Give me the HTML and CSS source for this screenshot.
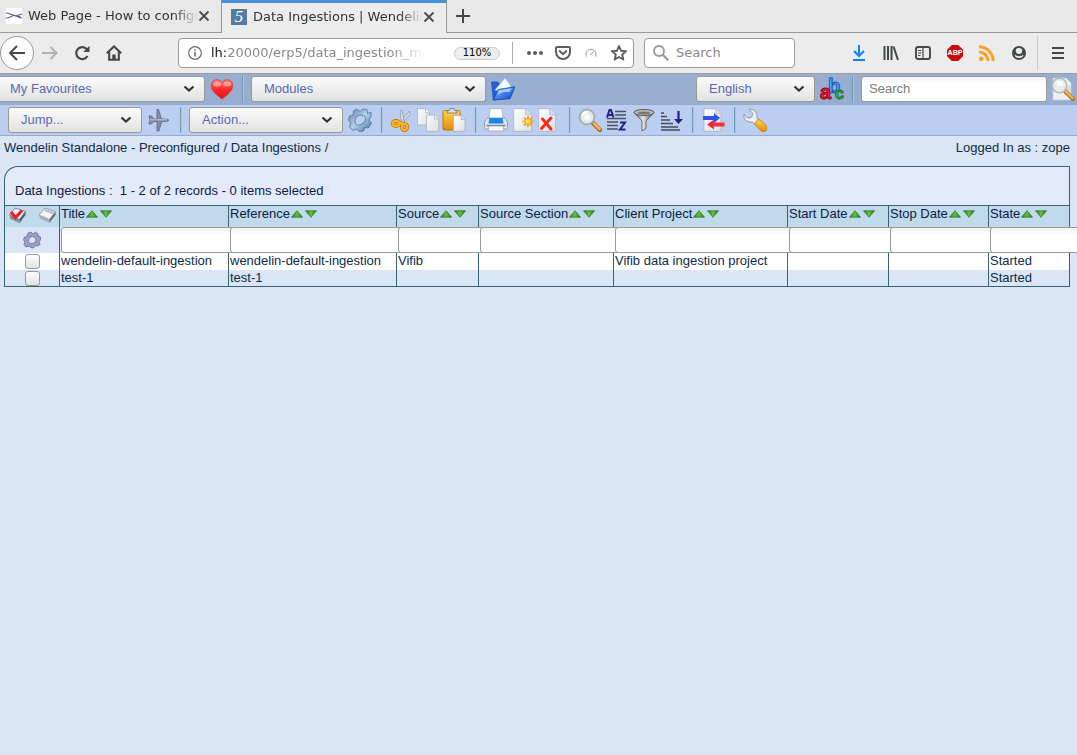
FILE: index.html
```html
<!DOCTYPE html>
<html lang="en">
<head>
<meta charset="utf-8">
<title>Data Ingestions | Wendelin</title>
<link rel="stylesheet" href="styles.css">
</head>
<body>
<svg class="defs" aria-hidden="true">
  <defs>
    <linearGradient id="gGreen" x1="0" y1="0" x2="1" y2="0"><stop offset="0" stop-color="#2c7424"/><stop offset=".5" stop-color="#62c43c"/><stop offset="1" stop-color="#256820"/></linearGradient>
    <linearGradient id="gPage" x1="0" y1="0" x2="1" y2="1"><stop offset="0" stop-color="#fff"/><stop offset="1" stop-color="#dcdfe6"/></linearGradient>
    <linearGradient id="gSteel" x1="0" y1="0" x2="1" y2="1"><stop offset="0" stop-color="#5d83ab"/><stop offset=".5" stop-color="#b4cde4"/><stop offset="1" stop-color="#48709c"/></linearGradient>
    <linearGradient id="gGold" x1="0" y1="0" x2="0" y2="1"><stop offset="0" stop-color="#ffd548"/><stop offset="1" stop-color="#e58a08"/></linearGradient>
    <linearGradient id="gHeart" x1="0" y1="0" x2="0" y2="1"><stop offset="0" stop-color="#ff7a70"/><stop offset=".5" stop-color="#ff2a2a"/><stop offset="1" stop-color="#d81414"/></linearGradient>
    <linearGradient id="gMetal" x1="0" y1="0" x2="1" y2="0"><stop offset="0" stop-color="#555"/><stop offset=".45" stop-color="#e8e8e8"/><stop offset="1" stop-color="#444"/></linearGradient>
    <linearGradient id="gBlue" x1="0" y1="0" x2="1" y2="1"><stop offset="0" stop-color="#7fc0ff"/><stop offset="1" stop-color="#0a3fd0"/></linearGradient>
    <radialGradient id="gLens"><stop offset="0" stop-color="#fff"/><stop offset="1" stop-color="#d3dfd9"/></radialGradient>
    <symbol id="chev" viewBox="0 0 12 8"><path d="M1.500 1.500 6 5.500 10.500 1.500" fill="none" stroke="#2e3436" stroke-width="2.200"/></symbol>
    <symbol id="up" viewBox="0 0 12 8"><path d="M.5 7.200 6 .7l5.500 6.500z" fill="url(#gGreen)" stroke="#337a33" stroke-width=".8"/></symbol>
    <symbol id="down" viewBox="0 0 12 8"><path d="M.5.800h11L6 7.300z" fill="url(#gGreen)" stroke="#337a33" stroke-width=".8"/></symbol>
    <symbol id="lens" viewBox="0 0 24 24"><path d="m15 15 7 7" stroke="#a96a20" stroke-width="4.500" stroke-linecap="round"/><path d="m16 15.500 5.500 5.500" stroke="#f5b652" stroke-width="2.500" stroke-linecap="round"/><circle cx="9" cy="9" r="7.500" fill="url(#gLens)" stroke="#a1a9a7" stroke-width="1.600"/><path d="M4.500 8a5 5 0 0 1 5-4" fill="none" stroke="#fff" stroke-width="2"/></symbol>
    <symbol id="close" viewBox="0 0 12 12"><path d="m1.500 1.500 9 9m0-9-9 9" stroke="#4a5052" stroke-width="1.900"/></symbol>
  </defs>
</svg>

<header class="browser">
  <div class="tabs">
    <div class="tab">
      <svg class="fav" viewBox="0 0 16 16"><path fill="#fff" d="M0 0h16v16H0z"/><path d="M0 5c4 0 6 3 15 4M0 10c4 0 5-2 8-2.500M9 8c3-.5 5-1.500 7-2M9 8c3 0 4 2 7 2" fill="none" stroke="#585a86" stroke-width="1.100"/></svg>
      <span class="tab-title">Web Page - How to configu</span>
      <button class="tab-close" aria-label="Close tab"><svg width="12" height="12"><use href="#close"/></svg></button>
    </div>
    <div class="tab active">
      <span class="fav five">5</span>
      <span class="tab-title">Data Ingestions | Wendelin</span>
      <button class="tab-close" aria-label="Close tab"><svg width="12" height="12"><use href="#close"/></svg></button>
    </div>
    <button class="new-tab" aria-label="New tab"><svg width="14" height="14" viewBox="0 0 14 14"><path d="M7 0v14M0 7h14" stroke="#43494b" stroke-width="2"/></svg></button>
  </div>
  <div class="nav">
    <button class="back" aria-label="Back"><svg width="18" height="16" viewBox="0 0 18 16"><path d="M17 8H2m7-7L2 8l7 7" fill="none" stroke="#43494b" stroke-width="2"/></svg></button>
    <button class="tool" aria-label="Forward"><svg width="16" height="16" viewBox="0 0 16 16"><path d="M0 8h14M8.500 2l6 6-6 6" fill="none" stroke="#b0b2b3" stroke-width="2"/></svg></button>
    <button class="tool" aria-label="Reload"><svg width="16" height="16" viewBox="0 0 16 16"><path d="M13.500 11A6 6 0 1 1 12.800 4.200" fill="none" stroke="#43494b" stroke-width="2.200"/><path d="M15.500.8V7H9.300z" fill="#43494b"/></svg></button>
    <button class="tool" aria-label="Home"><svg width="16" height="16" viewBox="0 0 16 16"><path d="M.8 8.300 8 1.400l7.200 6.900M3.200 7v7.800h9.600V7" fill="none" stroke="#43494b" stroke-width="2.100"/><path d="M6.300 9.500h3.400V15H6.300z" fill="#43494b"/></svg></button>
    <div class="url">
      <svg width="14" height="14" viewBox="0 0 14 14"><circle cx="7" cy="7" r="6.300" fill="none" stroke="#6b6b6b" stroke-width="1.200"/><path d="M7 6v4.500M7 3.200v1.600" stroke="#6b6b6b" stroke-width="1.600"/></svg>
      <span class="address"><b>lh:</b>20000/erp5/data_ingestion_mo</span>
      <button class="zoom">110%</button>
      <span class="rule"></span>
      <button class="in" aria-label="Page actions"><svg width="16" height="16" viewBox="0 0 16 16"><g fill="#5b5e60"><circle cx="2" cy="8" r="2"/><circle cx="8" cy="8" r="2"/><circle cx="14" cy="8" r="2"/></g></svg></button>
      <button class="in" aria-label="Save to Pocket"><svg width="16" height="16" viewBox="0 0 16 16"><path d="M2 2h12q1 0 1 1v4a7 7 0 0 1-14 0V3q0-1 1-1z" fill="none" stroke="#5b5e60" stroke-width="2"/><path d="m4.700 6 3.300 3.200L11.300 6" fill="none" stroke="#5b5e60" stroke-width="2" stroke-linecap="round"/></svg></button>
      <button class="in" aria-label="Speed"><svg width="16" height="16" viewBox="0 0 16 16"><path d="M3.500 11.500a5 5 0 1 1 9 0M7.500 10l3-3.500" fill="none" stroke="#8c8f91" stroke-width="1"/></svg></button>
      <button class="in star" aria-label="Bookmark"><svg width="16" height="16" viewBox="0 0 16 16"><path d="m8 1 2 4.700 5 .5-3.800 3.300 1.100 5L8 12l-4.300 2.500 1.100-5L1 6.200l5-.5z" fill="none" stroke="#5b5e60" stroke-width="1.900" stroke-linejoin="round"/></svg></button>
    </div>
    <label class="web-search">
      <svg width="16" height="16" viewBox="0 0 16 16"><circle cx="6" cy="6" r="5" fill="none" stroke="#999" stroke-width="1.900"/><path d="m9.700 9.700 5.600 5.600" stroke="#999" stroke-width="2.200"/></svg>
      <input type="text" placeholder="Search" aria-label="Web search">
    </label>
    <div class="extras">
      <button class="tool" aria-label="Downloads"><svg width="16" height="16" viewBox="0 0 16 16"><path d="M8 0v11M3 6l5 5 5-5M2 15h12" fill="none" stroke="#0a84ff" stroke-width="2"/></svg></button>
      <button class="tool" aria-label="Library"><svg width="16" height="16" viewBox="0 0 16 16"><path d="M1.500 1v14M5 1v14M8.500 1v14M10.500 1.500 15 15" stroke="#43494b" stroke-width="2"/></svg></button>
      <button class="tool" aria-label="Sidebars"><svg width="16" height="16" viewBox="0 0 16 16"><rect x="1" y="2" width="14" height="12" rx="2" fill="none" stroke="#43494b" stroke-width="1.900"/><path d="M8 2v12M3 5.500h3.500M3 8h3.500M3 10.500h2.500" stroke="#43494b" stroke-width="1.200"/></svg></button>
      <button class="abp">ABP</button>
      <button class="tool" aria-label="Feeds"><svg width="16" height="16" viewBox="0 0 16 16"><circle cx="2.300" cy="13.700" r="2.300" fill="#ff9a1f"/><path d="M0 7a9 9 0 0 1 9 9M0 1.800A14.200 14.200 0 0 1 14.200 16" fill="none" stroke="#ff9f26" stroke-width="3"/></svg></button>
      <button class="tool" aria-label="Account"><svg width="16" height="16" viewBox="0 0 16 16"><circle cx="8" cy="8" r="7" fill="#43494b"/><path d="M4.800 5.500q0-2.500 3.200-2.500t3.200 2.500q0 3.500-3.200 3.500T4.800 5.500z" fill="#ececec"/><path d="M3.500 9.500q1.500 1.700 4.500 1.700t4.500-1.700Q12 13 8 13t-4.500-3.500z" fill="#ececec"/></svg></button>
      <span class="rule light"></span>
      <button class="tool" aria-label="Menu"><svg width="12" height="14" viewBox="0 0 12 14"><path d="M0 2h12M0 7h12M0 12h12" stroke="#43494b" stroke-width="2"/></svg></button>
    </div>
  </div>
</header>

<form class="erp">
<div class="main-bar">
  <span class="pick favourites"><select aria-label="My Favourites"><option>My Favourites</option></select><svg><use href="#chev"/></svg></span>
  <button type="button" class="ic" aria-label="Go to favourite"><svg viewBox="0 0 24 24"><path d="M12 22C7 18 1.300 14.500 1.300 8.500 1.300 2 9 1 12 5.500 15 1 22.700 2 22.700 8.500 22.700 14.500 17 18 12 22z" fill="url(#gHeart)" stroke="#d8392f" stroke-width=".8"/><ellipse cx="7" cy="7" rx="4" ry="2.500" fill="#ffb0a8" opacity=".8"/><ellipse cx="17" cy="7" rx="4" ry="2.500" fill="#ffb0a8" opacity=".8"/></svg></button>
  <span class="sep"></span>
  <span class="pick modules"><select aria-label="Modules"><option>Modules</option></select><svg><use href="#chev"/></svg></span>
  <button type="button" class="ic" aria-label="Open module"><svg viewBox="0 0 24 24"><path d="M.7 5h6l1.500 2h9v14l-15 2z" fill="#2460dd" stroke="#1a49b5" stroke-width=".8"/><path d="m4 13 10-12 6 8-2 8z" fill="#f3f7ff" stroke="#a5b7da" stroke-width=".7"/><path d="M2.300 23 7 12.500l17-2.800-5 12z" fill="url(#gBlue)" stroke="#0c3bb5" stroke-width=".7"/><path d="M7.500 13.500 21 11.200l-3 4q-7-2-11 3z" fill="#b8e2ff" opacity=".8"/></svg></button>
  <span class="grow"></span>
  <span class="pick language"><select aria-label="Language"><option>English</option></select><svg><use href="#chev"/></svg></span>
  <button type="button" class="ic abc" aria-label="Change language"><svg viewBox="0 0 24 24" aria-hidden="true"><text x="8" y="16" fill="#4c9fee" stroke="#1a58bb">b</text><text x="0" y="22" fill="#ee2430" stroke="#a00016">a</text><text x="15" y="22" class="small" fill="#45bd55" stroke="#147534">c</text></svg></button>
  <span class="sep"></span>
  <input class="site-search" type="text" placeholder="Search" aria-label="Search">
  <button type="button" class="ic" aria-label="Search"><svg viewBox="0 0 24 24"><path d="M2 1h13l5 5v17H2z" fill="#edf0f3" stroke="#c8ced6" stroke-width=".7"/><path d="M13 8h7v10h-7z" fill="#cfe3ea"/><path d="m14 14 8 8" stroke="#ad7426" stroke-width="4.200" stroke-linecap="round"/><path d="m15 14.500 6.500 6.500" stroke="#f7ba58" stroke-width="2.200" stroke-linecap="round"/><circle cx="8.500" cy="8.500" r="7.200" fill="#e8edec" stroke="#b4bbb9" stroke-width="1.600"/><path d="M6 4h6v5H6z" fill="#fff" opacity=".7"/></svg></button>
</div>

<div class="context-bar">
  <span class="pick jump"><select aria-label="Jump"><option>Jump...</option></select><svg><use href="#chev"/></svg></span>
  <button type="button" class="ic" aria-label="Jump"><svg viewBox="0 0 24 24"><path d="M2 8h2.500l2.300 3H10V1.500h1.500l3 9.500q7 0 7.500 1.200-.5 1.200-7.500 1.500L12 23h-2v-9.500H6.800L4.500 16H2l1-4z" fill="#858eaa" stroke="#59617c" stroke-width=".8"/><path d="M3 11.800h17" stroke="#c3cadb" stroke-width="1"/></svg></button>
  <span class="sep"></span>
  <span class="pick action"><select aria-label="Action"><option>Action...</option></select><svg><use href="#chev"/></svg></span>
  <button type="button" class="ic gear" aria-label="Run action"><svg viewBox="0 0 24 24"><path fill-rule="evenodd" d="m8.500 1 3.500 2.500L15 1l4 .5.500 4L23 4v5l-2 3 2.500 3-3 5-3.500-.5-1.500 3.500-4.500.5-2.500-2.500L5 22.500 1.500 19l1-4L.5 12l1-4L5 7.500 5.500 3zM13 7q-5.500 0-6 5.500T11.500 17 17.500 12 13 7z" fill="url(#gSteel)" stroke="#537aa3" stroke-width=".9"/></svg></button>
  <span class="sep"></span>
  <button type="button" class="ic" aria-label="Cut"><svg viewBox="0 0 24 24"><path d="m11 14-.5-11 1.500-1 2.500 12zM10 15l9.500-12 .5 3-8 10z" fill="#e1e5ed" stroke="#858c9a" stroke-width=".7"/><g fill="none" stroke="#b96c00" stroke-width="3.800"><ellipse cx="6" cy="15.500" rx="3.400" ry="2.500"/><ellipse cx="14.500" cy="19" rx="2.600" ry="3.200"/></g><g fill="none" stroke="#ffb51c" stroke-width="2.400"><ellipse cx="6" cy="15.500" rx="3.400" ry="2.500"/><ellipse cx="14.500" cy="19" rx="2.600" ry="3.200"/></g><path d="m9 14.500 4 2" stroke="#ffb51c" stroke-width="2.500"/></svg></button>
  <button type="button" class="ic" aria-label="Copy"><svg viewBox="0 0 24 24" fill="url(#gPage)" stroke="#a9b1bf" stroke-width=".8"><path d="M1.500.7h8l4 4V17h-12z"/><path d="M9.500.7v4h4M10.500 7h8l4.200 4v12.300H10.500z"/><path d="M18.500 7v4h4.200"/></svg></button>
  <button type="button" class="ic" aria-label="Paste"><svg viewBox="0 0 24 24"><rect x="1" y="2.500" width="17" height="19.500" rx="1.500" fill="url(#gGold)" stroke="#b57a15"/><path d="M5 5V3q3 0 3-2.500h4Q12 3 15 3v2z" fill="#d9dbe0" stroke="#777" stroke-width=".8"/><path d="M11.500 7.500H19l4 4v11.800H11.500z" fill="url(#gPage)" stroke="#a9b1bf" stroke-width=".8"/><path d="M19 7.500v4h4" fill="#e2e5ee" stroke="#a9b1bf" stroke-width=".8"/></svg></button>
  <span class="sep"></span>
  <button type="button" class="ic" aria-label="Print"><svg viewBox="0 0 24 24"><path d="M6 .7h12l1 11H5z" fill="#fff" stroke="#a7b0c0" stroke-width=".8"/><path d="M3 10h18l2.500 4v5.500q0 1.500-1.500 1.500H2q-1.500 0-1.500-1.500V14z" fill="#dfe3eb" stroke="#8f98a8" stroke-width=".9"/><path d="M5.500 10h13l1 5.500h-15z" fill="#1689ea"/><path d="M2.500 17.500h19" stroke="#737d90" stroke-width="1.300"/><path d="M5 18h14l1 5H4z" fill="#f8fafc" stroke="#9ca5b4" stroke-width=".8"/></svg></button>
  <button type="button" class="ic" aria-label="New"><svg viewBox="0 0 24 24"><path d="M3.700.7h12l6 6v16.600h-18z" fill="url(#gPage)" stroke="#a9b1bf" stroke-width=".8"/><path d="M15.700.7v6h6" fill="#dce2ee" stroke="#a9b1bf" stroke-width=".7"/><path d="M18 8v11M12.500 13.500h11M14 9.500l8 8m0-8-8 8" stroke="#f1a51e" stroke-width="2"/><circle cx="18" cy="13.500" r="2.200" fill="#ffe35a"/></svg></button>
  <button type="button" class="ic" aria-label="Delete"><svg viewBox="0 0 24 24"><path d="M2.700.7h11l6 6v16.600h-17z" fill="url(#gPage)" stroke="#a9b1bf" stroke-width=".8"/><path d="M13.700.7v6h6" fill="#dce2ee" stroke="#a9b1bf" stroke-width=".7"/><path d="m6.500 11 8.500 10m0-11L5.500 20.500" stroke="#f02b1b" stroke-width="3" stroke-linecap="round"/></svg></button>
  <span class="sep"></span>
  <span class="wide">
    <button type="button" class="ic" aria-label="Find"><svg viewBox="0 0 24 24"><use href="#lens"/></svg></button>
    <button type="button" class="ic" aria-label="Sort alphabetically"><svg viewBox="0 0 24 24"><path d="M10 3.500h11M10 7h11M2 10.500h19M2 14h11M2 17.500h11M2 21h11" stroke="#4b4f5c" stroke-width="1.500"/><path d="M2 9.500 4.500 2h1.500L8.500 9.500M3.500 7h4M15 14.500h5l-5 7h5.500" fill="none" stroke="#20208c" stroke-width="2"/></svg></button>
    <button type="button" class="ic" aria-label="Filter"><svg viewBox="0 0 24 24"><path d="M2 4.500 10 13v10l4-2.500V13l8-8.500z" fill="url(#gMetal)" stroke="#555" stroke-width=".8"/><ellipse cx="12" cy="4.500" rx="10" ry="3" fill="#bdbdbd" stroke="#595959"/><ellipse cx="12" cy="5" rx="6.500" ry="1.500" fill="#777"/></svg></button>
    <button type="button" class="ic" aria-label="Sort"><svg viewBox="0 0 24 24"><path d="M2 5h3M2 8.500h6M2 12h9M2 15.500h12M2 19h17M2 22h19" stroke="#474b59" stroke-width="1.600"/><path d="M19.500 3v11" stroke="#20208c" stroke-width="2.200"/><path d="M15 11h9l-4.500 5z" fill="#20208c"/></svg></button>
  </span>
  <span class="sep"></span>
  <button type="button" class="ic" aria-label="Import or export"><svg viewBox="0 0 24 24"><path d="M3 .7h12l5 5v17.600H3z" fill="url(#gPage)" stroke="#a9b1bf" stroke-width=".8"/><path d="M15 .7v5h5" fill="#dce2ee" stroke="#a9b1bf" stroke-width=".7"/><path d="M2 8h11V5l6 5-6 5v-3H2z" fill="#2f55e6"/><path d="M23.500 14.500H13v-3l-7 5 7 5v-3h10.500z" fill="#fb2a3b"/></svg></button>
  <span class="sep"></span>
  <button type="button" class="ic" aria-label="Configure"><svg viewBox="0 0 24 24"><path d="M1 6q-1 7 6 8l3 .5 4 4 4-4-4-4Q15 2 7 1l-1 .5 4 4-1.500 4-4 .5z" fill="#eef0f4" stroke="#8b909b" stroke-width=".9"/><path d="m11.500 15.500 4-4.500q5 3 8 7 1.500 4.500-2 5.500-3 .5-5-2z" fill="url(#gGold)" stroke="#c27a0d" stroke-width=".8"/></svg></button>
</div>

<div class="status">
  <nav><a href="#">Wendelin Standalone - Preconfigured</a> / <a href="#">Data Ingestions</a> /</nav>
  <span>Logged In as : zope</span>
</div>

<main class="listbox">
  <div class="caption"><a href="#">Data Ingestions</a>&nbsp;:&nbsp; 1 - 2 of 2 records - 0 items selected</div>
  <table>
    <colgroup><col class="w-tick"><col class="w-title"><col class="w-ref"><col class="w-source"><col class="w-section"><col class="w-project"><col class="w-start"><col class="w-stop"><col class="w-state"></colgroup>
    <thead>
      <tr class="heads">
        <th><div class="marks">
          <button type="button" aria-label="Check all"><svg width="18" height="17" viewBox="0 0 18 17"><path d="M7 1 17.500 4.500 11.500 12.500 1.500 8z" fill="#eef0f5" stroke="#6c7180" stroke-width=".8"/><path d="m1.500 8 10 4.500V16l-9-4z" fill="#868b9a"/><path d="m11.500 12.500 6-8V8l-6 8z" fill="#555a68"/><path d="m3 5 4.500 5.500L14 3.500" fill="none" stroke="#ee1c1c" stroke-width="3"/></svg></button>
          <button type="button" aria-label="Uncheck all"><svg width="18" height="17" viewBox="0 0 18 17"><path d="M7 1 17.500 4.500 11.500 12.500 1 8z" fill="#f1f3f7" stroke="#8a8f9e" stroke-width=".8"/><path d="m1 8 10.500 4.500V16L2 11.500z" fill="#a9aebb"/><path d="m11.500 12.500 6-8V8l-6 8z" fill="#6a6f7d"/><path d="m7.500 2 8.500 3-1.500 2L6 4z" fill="#b6bfd9"/></svg></button>
        </div></th>
        <th><a href="#">Title</a><button type="button" class="s" aria-label="Ascending"><svg><use href="#up"/></svg></button><button type="button" class="s" aria-label="Descending"><svg><use href="#down"/></svg></button></th>
        <th><a href="#">Reference</a><button type="button" class="s" aria-label="Ascending"><svg><use href="#up"/></svg></button><button type="button" class="s" aria-label="Descending"><svg><use href="#down"/></svg></button></th>
        <th><a href="#">Source</a><button type="button" class="s" aria-label="Ascending"><svg><use href="#up"/></svg></button><button type="button" class="s" aria-label="Descending"><svg><use href="#down"/></svg></button></th>
        <th><a href="#">Source Section</a><button type="button" class="s" aria-label="Ascending"><svg><use href="#up"/></svg></button><button type="button" class="s" aria-label="Descending"><svg><use href="#down"/></svg></button></th>
        <th><a href="#">Client Project</a><button type="button" class="s" aria-label="Ascending"><svg><use href="#up"/></svg></button><button type="button" class="s" aria-label="Descending"><svg><use href="#down"/></svg></button></th>
        <th><a href="#">Start Date</a><button type="button" class="s" aria-label="Ascending"><svg><use href="#up"/></svg></button><button type="button" class="s" aria-label="Descending"><svg><use href="#down"/></svg></button></th>
        <th><a href="#">Stop Date</a><button type="button" class="s" aria-label="Ascending"><svg><use href="#up"/></svg></button><button type="button" class="s" aria-label="Descending"><svg><use href="#down"/></svg></button></th>
        <th><a href="#">State</a><button type="button" class="s" aria-label="Ascending"><svg><use href="#up"/></svg></button><button type="button" class="s" aria-label="Descending"><svg><use href="#down"/></svg></button></th>
      </tr>
      <tr class="filters">
        <td class="center"><button type="button" aria-label="Apply filter"><svg width="18" height="18" viewBox="0 0 18 18"><path fill-rule="evenodd" d="m8 1 2 2 2.500-2L15 3v2l2.500 1v3L16 10.500l1 3-2.500 1.500-2-.5-2 2.500-3-.5L6 15l-3 1-2-2.500L2 11 .5 9l1-3L4 5.500 5 2zM9.500 5.500Q6 5.500 5.500 9T9 12.500 13 9 9.500 5.500z" fill="#9a9dcc" stroke="#676b9e" stroke-width=".8"/></svg></button></td>
        <td><input type="text" aria-label="Title"></td>
        <td><input type="text" aria-label="Reference"></td>
        <td><input type="text" aria-label="Source"></td>
        <td><input type="text" aria-label="Source Section"></td>
        <td><input type="text" aria-label="Client Project"></td>
        <td><input type="text" aria-label="Start Date"></td>
        <td><input type="text" aria-label="Stop Date"></td>
        <td><input type="text" aria-label="State"></td>
      </tr>
    </thead>
    <tbody>
      <tr><td class="center"><input type="checkbox" aria-label="Select wendelin-default-ingestion"></td><td><a href="#">wendelin-default-ingestion</a></td><td><a href="#">wendelin-default-ingestion</a></td><td><a href="#">Vifib</a></td><td></td><td><a href="#">Vifib data ingestion project</a></td><td></td><td></td><td><a href="#">Started</a></td></tr>
      <tr><td class="center"><input type="checkbox" aria-label="Select test-1"></td><td><a href="#">test-1</a></td><td><a href="#">test-1</a></td><td></td><td></td><td></td><td></td><td></td><td><a href="#">Started</a></td></tr>
    </tbody>
  </table>
</main>
</form>
</body>
</html>
```
FILE: styles.css
```css
* { box-sizing: border-box; }
body {
  margin: 0;
  min-height: 100vh;
  background: #dae5f5;
  color: #0d2c47;
  font: 13px/16px "Liberation Sans", Arial, sans-serif;
}
a { color: inherit; text-decoration: none; }
button { padding: 0; border: 0; background: none; color: inherit; font: inherit; }
svg { display: block; flex: none; }
.defs { position: absolute; width: 0; height: 0; }

/* Browser frame */
.browser { background: #ececec; border-bottom: 1px solid #9c9c98; font: 13px/16px "DejaVu Sans", sans-serif; }
.tabs { display: flex; height: 33px; background: #e8e8e8; }
.tabs::after { content: ""; flex: 1; border-bottom: 1px solid #999; }
.tab { display: flex; align-items: center; width: 221px; padding: 0 11px 0 6px; border-bottom: 1px solid #999; color: #2e3436; }
.tab.active { width: 226px; padding: 0 11px 2px 9px; background: #ececec; border: solid #999; border-width: 0 1px; border-top: 3px solid #4a90d9; }
.fav { width: 16px; height: 16px; flex: none; margin-right: 6px; }
.five { background: #557b9f; color: #fff; font: italic 17px/16px "Liberation Serif", serif; text-align: center; }
.tab-title { flex: 1; overflow: hidden; white-space: nowrap; mask-image: linear-gradient(to right, #000 calc(100% - 24px), transparent); }
.new-tab { display: flex; align-items: center; padding: 0 9px; border-bottom: 1px solid #999; }
.nav { display: flex; align-items: center; height: 40px; }
.back { display: grid; place-items: center; width: 34px; height: 34px; border: 1px solid #999; border-radius: 50%; background: #fcfcfc; }
.tool { display: grid; place-items: center; width: 32px; height: 32px; }
.url { display: flex; align-items: center; flex: 1; min-width: 0; height: 30px; margin-left: 48px; padding: 0 6px 0 9px; border: 1px solid #999; border-radius: 4px; background: #fff; }
.address { flex: 1; min-width: 0; margin: 0 28px 0 9px; overflow: hidden; white-space: nowrap; color: #888; mask-image: linear-gradient(to right, #000 calc(100% - 36px), transparent); }
.address b { color: #111; font-weight: normal; }
.zoom { width: 46px; height: 13px; border: 1px solid #ccc; border-radius: 7px; background: #eee; color: #000; font-size: 10px; line-height: 10px; }
.rule { width: 1px; height: 22px; margin: 0 8px 0 12px; background: #aaa; }
.in { display: grid; place-items: center; width: 28px; height: 28px; }
.in.star { width: 16px; margin-left: 6px; }
.web-search { display: flex; align-items: center; gap: 7px; width: 151px; height: 30px; margin-left: 10px; padding: 0 8px; border: 1px solid #999; border-radius: 4px; background: #fff; }
.web-search input { width: 100%; min-width: 0; padding: 0; border: 0; outline: 0; background: none; font: inherit; }
.web-search input::placeholder { color: #888; opacity: 1; }
.extras { display: flex; align-items: center; margin-left: 48px; padding-right: 3px; }
.abp { width: 16px; height: 16px; margin: 0 8px; background: #c70d0d; color: #fff; font: bold 7px/16px "Liberation Sans", sans-serif; clip-path: polygon(30% 0, 70% 0, 100% 30%, 100% 70%, 70% 100%, 30% 100%, 0 70%, 0 30%); }
.rule.light { height: 34px; margin: 0 4px 0 2px; background: #ccc; }

/* Application bars */
.erp { overflow-x: clip; }
.main-bar, .context-bar { display: flex; align-items: center; }
.main-bar { height: 31px; padding: 0 2px 1px 0; background: #97aed0; }
.context-bar { gap: 2px; height: 31px; padding-left: 8px; background: #bcceef; border-bottom: 1px solid #97aed0; }
.grow { flex: 1; }
.pick { display: grid; align-items: center; height: 26px; }
.pick > * { grid-area: 1 / 1; }
.pick svg { width: 12px; height: 8px; justify-self: end; margin-right: 10px; pointer-events: none; }
.pick select {
  appearance: none;
  width: 100%;
  height: 26px;
  padding: 0 12px;
  border: 1px solid #9a9a96;
  border-radius: 3px;
  background: linear-gradient(#fbfbfb, #e2e2e2);
  color: #5b68b0;
  font: inherit;
}
.favourites { width: 207px; margin-left: -2px; }
.favourites select { padding-left: 11px; }
.modules { width: 235px; margin-right: 5px; }
.language { width: 119px; margin-right: 5px; }
.jump { width: 134px; margin-right: 3px; }
.action { width: 154px; margin-right: 3px; }
.favourites + .ic { margin-left: 5px; }
.ic { width: 24px; height: 24px; flex: none; }
.ic svg { width: 24px; height: 24px; }
.abc text { font: bold 20px "Liberation Sans", sans-serif; stroke-width: 1; }
.abc .small { font-size: 16px; }
.sep { width: 2px; height: 26px; flex: none; margin: 0 7px 0 8px; background: #7298b8; border-right: 1px solid #a9c8de; }
.context-bar .sep { margin: 0 5px 0 7px; }
.wide { display: flex; gap: 3px; }
.site-search { width: 186px; height: 26px; margin-right: 4px; padding: 0 7px 1px; border: 1px solid #9a9a96; border-radius: 3px; background: linear-gradient(#f4f4f4, #fff 30%); font: inherit; }
.site-search::placeholder { color: #7b7b7b; opacity: 1; }
.status { display: flex; justify-content: space-between; padding: 4px 7px 10px 4px; }

/* List */
.listbox { margin: 0 7px 0 4px; }
.caption { height: 39px; padding: 16px 10px 0; border: 1px solid #366274; border-bottom: 0; border-top-left-radius: 14px; background: #e3eafa; color: #0c1a44; }
table { width: 100%; table-layout: fixed; border-collapse: separate; border-spacing: 0; border: 1px solid #366274; }
th, td { padding: 0 1px; text-align: left; font-weight: normal; white-space: nowrap; vertical-align: top; border-right: 1px solid #366274; }
th:last-child, td:last-child { border-right: 0; }
.w-tick { width: 55px; }
.w-title { width: 169px; }
.w-ref { width: 168px; }
.w-source { width: 82px; }
.w-section { width: 135px; }
.w-project { width: 174px; }
.w-start { width: 101px; }
.w-stop { width: 100px; }
.w-state { width: 80px; }
.heads th { height: 21px; background: #c0d9eb; color: #0c1a44; }
.marks { display: flex; justify-content: space-between; padding: 1px 2px; }
.s { margin: 0 1px; }
.s svg { width: 12px; height: 8px; }
.filters td { height: 26px; line-height: 0; }
.filters input { width: 180px; height: 26px; position: relative; border: 1px solid #9a9a96; border-radius: 3px; background: linear-gradient(#f3f3f3, #fff 30%); }
.center { text-align: center; }
.filters .center { padding-top: 4px; }
.filters button { display: inline-block; }
tbody td { height: 17px; }
tbody tr:last-child td { height: 16px; }
tbody tr:first-child td { background: #fff; }
input[type="checkbox"] { appearance: none; display: block; width: 15px; height: 15px; margin: 1px auto 0; border: 1px solid #999; border-radius: 3px; background: linear-gradient(#fff, #e2e2e2); }
```
